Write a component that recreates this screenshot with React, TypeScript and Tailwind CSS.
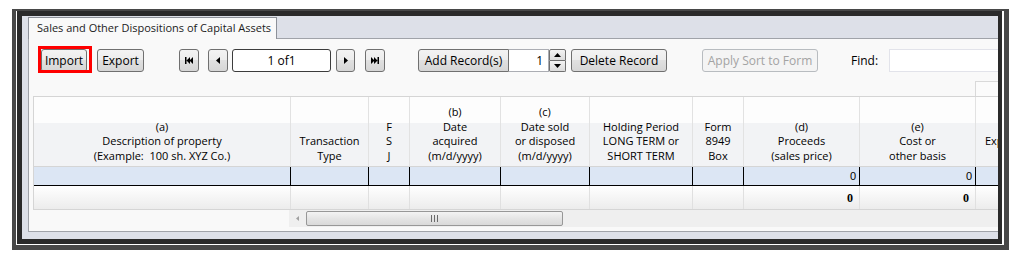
import type { ReactNode } from 'react'

// column layout of the grid (widths include the right border)
type Col = { w: number; lines: string[]; val?: string }

const cols: Col[] = [
  { w: 257, lines: ['(a)', 'Description of property', '(Example:  100 sh. XYZ Co.)'] },
  { w: 78, lines: ['Transaction', 'Type'] },
  { w: 41, lines: ['F', 'S', 'J'] },
  { w: 91, lines: ['(b)', 'Date', 'acquired', '(m/d/yyyy)'] },
  { w: 89, lines: ['(c)', 'Date sold', 'or disposed', '(m/d/yyyy)'] },
  { w: 103, lines: ['Holding Period', 'LONG TERM or', 'SHORT TERM'] },
  { w: 51, lines: ['Form', '8949', 'Box'] },
  { w: 116, lines: ['(d)', 'Proceeds', '(sales price)'], val: '0' },
  { w: 116, lines: ['(e)', 'Cost or', 'other basis'], val: '0' },
  { w: 23, lines: ['Exp', '\u00a0'] },
]

const gridCols =
  'grid grid-cols-[257px_78px_41px_91px_89px_103px_51px_116px_116px_23px]'

const ui = "font-['Open_Sans',sans-serif]"

function Btn({ children, className = '' }: { children: ReactNode; className?: string }) {
  return (
    <button
      type="button"
      className={`flex h-[23px] shrink-0 items-center justify-center rounded-[3px] border border-[#707070] bg-[linear-gradient(to_bottom,#f3f3f3_0%,#ececec_50%,#e0e0e0_50%,#d6d6d6_100%)] text-[12px] leading-none text-black ${className}`}
    >
      {children}
    </button>
  )
}

// small arrow glyphs for the pager
function Tri({ dir }: { dir: 'l' | 'r' }) {
  return (
    <svg width="4" height="7" viewBox="0 0 4 7">
      {dir === 'l' ? <path d="M4 0V7L0 3.5Z" fill="#000" /> : <path d="M0 0V7L4 3.5Z" fill="#000" />}
    </svg>
  )
}

function Ends({ dir }: { dir: 'l' | 'r' }) {
  return (
    <svg width="8" height="7" viewBox="0 0 8 7">
      {dir === 'l' ? (
        <path d="M0 0H1.5V7H0Z M5 0V7L1.5 3.5Z M8 0V7L4.5 3.5Z" fill="#000" />
      ) : (
        <path d="M6.5 0H8V7H6.5Z M3 0V7L6.5 3.5Z M0 0V7L3.5 3.5Z" fill="#000" />
      )}
    </svg>
  )
}

function Toolbar() {
  return (
    <div className={`flex w-max items-center pl-[12px] ${ui}`}>
      <div className="relative shrink-0">
        <Btn className="w-[46px]">Import</Btn>
        <div className="pointer-events-none absolute -top-[3px] -left-[3px] -right-[5px] -bottom-[1px] border-[3px] border-[#ff0000]" />
      </div>
      <Btn className="ml-[10px] w-[47px]">Export</Btn>

      <Btn className="ml-[35px] w-[20px]">
        <Ends dir="l" />
      </Btn>
      <Btn className="ml-[9px] w-[20px]">
        <Tri dir="l" />
      </Btn>
      <div className="ml-[4px] flex h-[23px] w-[99px] shrink-0 items-center justify-center rounded-[3px] border border-[#3c3c3c] bg-white text-[12px] text-black">
        1 of1
      </div>
      <Btn className="ml-[5px] w-[19px]">
        <Tri dir="r" />
      </Btn>
      <Btn className="ml-[10px] w-[20px]">
        <Ends dir="r" />
      </Btn>

      <Btn className="ml-[33px] w-[91px] rounded-r-none">Add Record(s)</Btn>
      <div className="flex h-[23px] w-[40px] shrink-0 items-center justify-end border border-l-0 border-[#abadb3] bg-white pr-[5px] text-[12px] text-black">
        1
      </div>
      <div className="flex h-[23px] w-[17px] shrink-0 flex-col">
        <button
          type="button"
          className="flex h-[12px] items-center justify-center rounded-t-[2px] border border-[#707070] bg-[linear-gradient(to_bottom,#f3f3f3,#dcdcdc)]"
        >
          <svg width="7" height="4" viewBox="0 0 7 4">
            <path d="M0 4H7L3.5 0Z" fill="#000" />
          </svg>
        </button>
        <button
          type="button"
          className="flex h-[11px] items-center justify-center rounded-b-[2px] border border-t-0 border-[#707070] bg-[linear-gradient(to_bottom,#f3f3f3,#dcdcdc)]"
        >
          <svg width="7" height="4" viewBox="0 0 7 4">
            <path d="M0 0H7L3.5 4Z" fill="#000" />
          </svg>
        </button>
      </div>
      <Btn className="ml-[5px] w-[96px]">Delete Record</Btn>

      <button
        type="button"
        className="ml-[35px] flex h-[23px] w-[116px] shrink-0 items-center justify-center rounded-[3px] border border-[#b8bcc0] bg-[#f4f4f4] text-[12px] text-[#a3a3a3]"
      >
        Apply Sort to Form
      </button>
      <span className="ml-[33px] shrink-0 text-[12px] text-black">Find:</span>
      <div className="ml-[11px] h-[23px] w-[111px] shrink-0 border border-r-0 border-[#e2e3ea] bg-white" />
    </div>
  )
}

function Grid() {
  return (
    <div className="ml-[4px] mt-[9px]">
      {/* band above the next column group */}
      <div className={`${gridCols} h-[15px]`}>
        {cols.map((c, i) =>
          i === cols.length - 1 ? (
            <div key={i} className="border-t border-l border-[#d9d9d9] bg-[#fbfbfb]" />
          ) : (
            <div key={i} />
          )
        )}
      </div>

      <div className="border-l border-[#d5d5d5]">
        {/* header */}
        <div className={`${gridCols} h-[71px] border-t border-b border-[#d5d5d5] ${ui}`}>
          {cols.map((c, i) => (
            <div
              key={i}
              className={`flex flex-col justify-end overflow-hidden border-[#e2e2e2] bg-[linear-gradient(to_bottom,#fdfdfd_0%,#fdfdfd_38%,#f2f3f5_38%,#f2f3f5_100%)] pb-[3px] text-[11px] leading-[14.5px] whitespace-pre text-black ${
                i === cols.length - 1 ? 'items-start pl-[9px]' : 'items-center border-r'
              }`}
            >
              {c.lines.map((l, j) => (
                <span key={j}>{l}</span>
              ))}
            </div>
          ))}
        </div>

        {/* data row */}
        <div className={`${gridCols} h-[19px] border-b border-black bg-[#dce6f4]`}>
          {cols.map((c, i) => (
            <div
              key={i}
              className="flex items-center justify-end border-r border-black pr-[3px] font-['Liberation_Sans',sans-serif] text-[11px] text-black"
            >
              {c.val}
            </div>
          ))}
        </div>

        {/* totals */}
        <div className={`${gridCols} h-[24px] border-b border-[#d5d5d5]`}>
          {cols.map((c, i) => (
            <div
              key={i}
              className="flex items-center justify-end border-r border-[#e0e0e0] bg-[linear-gradient(to_bottom,#ffffff,#ececec)] pr-[6px] font-['Liberation_Serif',serif] text-[12px] font-bold text-black"
            >
              {c.val}
            </div>
          ))}
        </div>
      </div>

      {/* horizontal scrollbar */}
      <div className="ml-[256px] flex h-[17px] items-center bg-[#efefef]">
        <div className="flex w-[17px] items-center justify-center">
          <svg width="3" height="5" viewBox="0 0 3 5">
            <path d="M3 0V5L0 2.5Z" fill="#a0a0a0" />
          </svg>
        </div>
        <div className="flex h-[15px] w-[257px] items-center justify-center rounded-[2px] border border-[#979797] bg-[linear-gradient(to_bottom,#f3f3f3,#e2e2e2_60%,#d9d9d9)]">
          <svg width="7" height="7" viewBox="0 0 7 7">
            <path d="M0.5 0V7M3.5 0V7M6.5 0V7" stroke="#6b6b6b" strokeWidth="1" />
          </svg>
        </div>
      </div>
    </div>
  )
}

export default function App() {
  return (
    <div className="h-[265px] w-[1019px] overflow-hidden bg-white pt-[9px] pl-[12px]">
      {/* picture frame */}
      <div className="h-[241px] w-[997px] bg-[#484848] pt-[2px] pr-[5px] pb-[5px] pl-[4px]">
        <div className="h-full border-r-2 border-b border-l border-white">
          <div className="flex h-full flex-col border-[5px] border-r-4 border-t-[5px] border-[#2a2a2a] bg-[#dde0e8]">
            {/* tab strip */}
            <div className="flex h-[22px] items-end pl-[6px]">
              <div
                className={`relative z-10 -mb-px flex h-[22px] w-[249px] items-center border border-b-0 border-[#8d9199] bg-[#f9f9f9] pl-[8px] text-[11px] whitespace-nowrap text-[#1b1b1b] ${ui}`}
              >
                Sales and Other Dispositions of Capital Assets
              </div>
            </div>
            {/* page */}
            <div className="ml-[6px] h-[194px] overflow-hidden border-t border-b border-l border-[#a0a3a9] bg-[#f9f9f9] pt-[10px]">
              <Toolbar />
              <Grid />
            </div>
          </div>
        </div>
      </div>
    </div>
  )
}
